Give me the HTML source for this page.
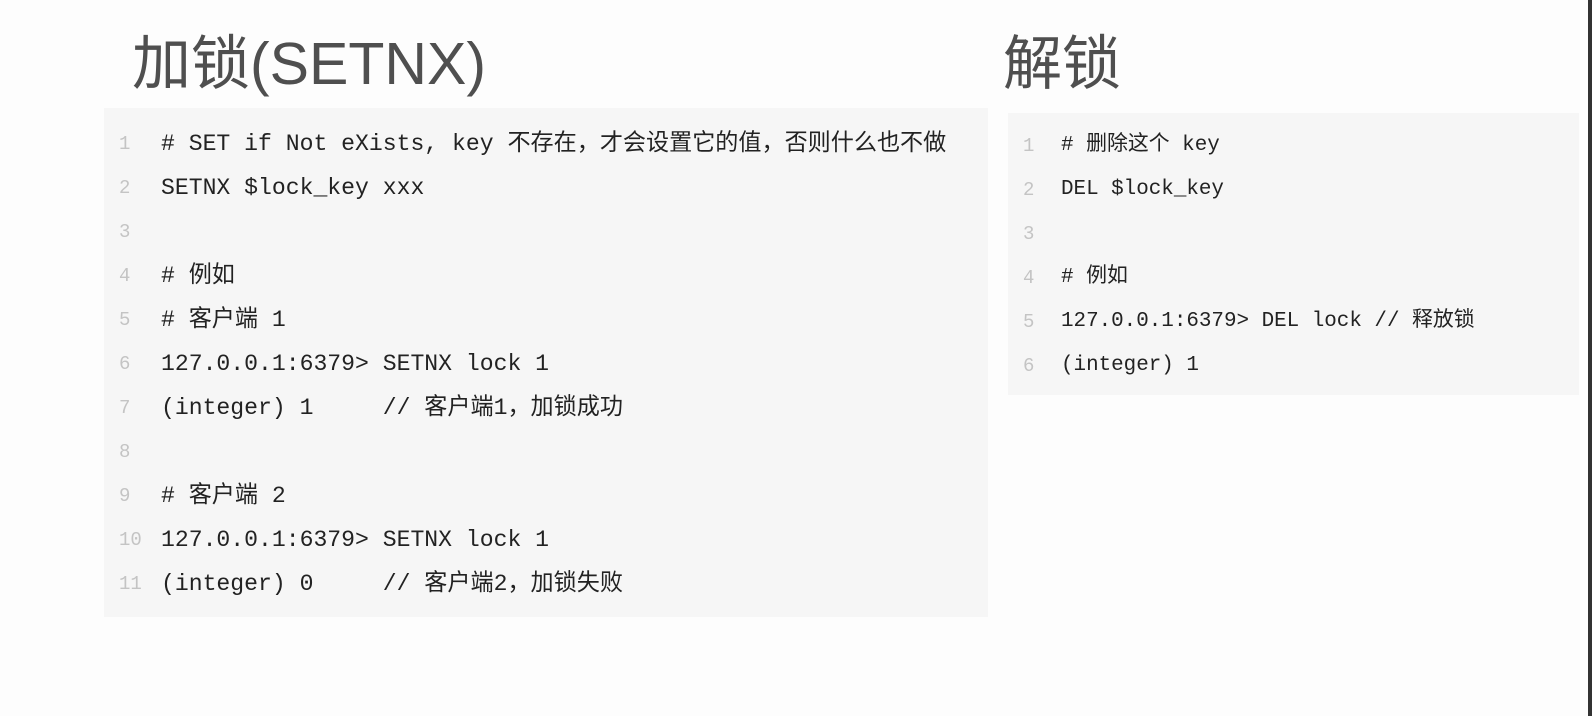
<!DOCTYPE html>
<html><head><meta charset="utf-8"><style>
body{margin:0;width:1592px;height:716px;background:#fdfdfd;position:relative;overflow:hidden;font-family:"Liberation Sans","Noto Sans CJK SC",sans-serif;}
.t{position:absolute;font-size:59px;color:#4f4f4f;line-height:1;}
.blk{position:absolute;background:#f6f6f6;}
.ln{position:absolute;font-family:"Liberation Mono","Noto Sans CJK SC",monospace;font-size:23.1px;line-height:44px;white-space:pre;color:#222;}
.num{color:#c4c4c4;font-size:19px;}
.r{font-size:20.9px;}
</style></head><body>
<div class="t" style="left:132px;top:35px;">加锁(SETNX)</div>
<div class="t" style="left:1003px;top:35px;">解锁</div>
<div class="blk" style="left:104px;top:108px;width:884px;height:509px;"></div>
<div class="blk" style="left:1008px;top:113px;width:571px;height:282px;"></div>
<div style="position:absolute;left:1588px;top:0;width:4px;height:716px;background:#333;"></div>
<div class="ln num" style="left:119px;top:122px;">1
2
3
4
5
6
7
8
9
10
11</div>
<div class="ln" style="left:161px;top:122px;"># SET if Not eXists, key 不存在，才会设置它的值，否则什么也不做
SETNX $lock_key xxx

# 例如
# 客户端 1
127.0.0.1:6379> SETNX lock 1
(integer) 1     // 客户端1，加锁成功

# 客户端 2
127.0.0.1:6379> SETNX lock 1
(integer) 0     // 客户端2，加锁失败</div>
<div class="ln num" style="left:1023px;top:124px;">1
2
3
4
5
6</div>
<div class="ln r" style="left:1061px;top:124px;"># 删除这个 key
DEL $lock_key

# 例如
127.0.0.1:6379> DEL lock // 释放锁
(integer) 1</div>
</body></html>
